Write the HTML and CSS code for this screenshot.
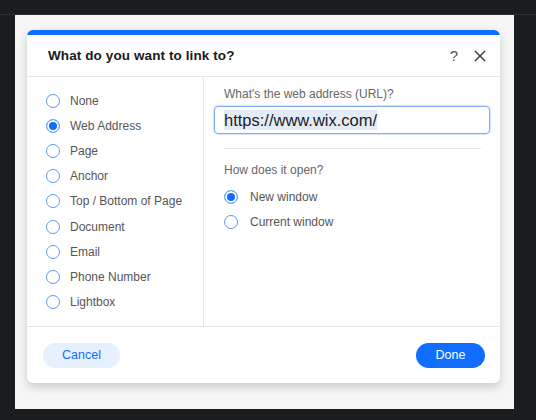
FILE: index.html
```html
<!DOCTYPE html>
<html lang="en">
<head>
  <meta charset="UTF-8" />
  <title>Link Panel</title>
  <link rel="stylesheet" href="styles.css">
</head>
<body>
  <div class="topline"></div>
  <div class="stage">
    <div class="dialog">
      <div class="accent"></div>
      <div class="header">
        <h1>What do you want to link to?</h1>
        <div class="tools">
          <span class="help">?</span>
          <svg class="close" width="12" height="12" viewBox="0 0 12 12">
            <path d="M1 1 L11 11 M11 1 L1 11" stroke="#333" stroke-width="1.4" fill="none" />
          </svg>
        </div>
      </div>
      <div class="content">
        <ul class="types">
          <li><span class="radio"></span>None</li>
          <li><span class="radio on"></span>Web Address</li>
          <li><span class="radio"></span>Page</li>
          <li><span class="radio"></span>Anchor</li>
          <li><span class="radio"></span>Top / Bottom of Page</li>
          <li><span class="radio"></span>Document</li>
          <li><span class="radio"></span>Email</li>
          <li><span class="radio"></span>Phone Number</li>
          <li><span class="radio"></span>Lightbox</li>
        </ul>
        <div class="form">
          <label class="label">What's the web address (URL)?</label>
          <div class="input"><span class="sel">https://www.wix.com/</span></div>
          <hr class="divider" />
          <div class="label open">How does it open?</div>
          <div class="option"><span class="radio on"></span>New window</div>
          <div class="option"><span class="radio"></span>Current window</div>
        </div>
      </div>
      <div class="footer">
        <button class="cancel">Cancel</button>
        <button class="done">Done</button>
      </div>
    </div>
  </div>
</body>
</html>
```

FILE: styles.css
```css
html, body {
  margin: 0;
  background: #1b1c1e;
  font-family: 'Liberation Sans', Arial, sans-serif;
}
.topline {
  height: 14px;
  border-bottom: 1px solid #2c2d30;
}
.stage {
  margin-left: 15px;
  width: 499px;
  height: 394px;
  background: #f6f6f7;
  box-sizing: border-box;
  padding: 15px 0 0 12px;
}
.dialog {
  width: 473px;
  background: #fff;
  border-radius: 6px;
  overflow: hidden;
  box-shadow: 0 4px 10px rgba(0, 0, 0, 0.18);
}
.accent {
  height: 5px;
  background: #116dff;
}
.header {
  height: 41px;
  border-bottom: 1px solid #e5e7eb;
  display: flex;
  align-items: center;
  justify-content: space-between;
  padding: 0 14px 0 21px;
}
h1 {
  margin: 0;
  font-size: 13.5px;
  font-weight: bold;
  color: #1a1a1a;
  letter-spacing: 0.1px;
}
.tools {
  display: flex;
  align-items: center;
  gap: 16px;
}
.help {
  font-size: 15px;
  color: #555;
}
.content {
  display: flex;
  height: 249px;
  border-bottom: 1px solid #e5e7eb;
}
.types {
  list-style: none;
  margin: 0;
  padding: 11px 0 0 19px;
  width: 177px;
  box-sizing: border-box;
  border-right: 1px solid #e5e7eb;
}
.types li, .option {
  display: flex;
  align-items: center;
  height: 25.2px;
  font-size: 12px;
  color: #555;
}
.radio {
  width: 12px;
  height: 12px;
  border: 1.5px solid #5c98f6;
  border-radius: 50%;
  margin-right: 10px;
  flex: none;
  background: #fff;
}
.radio.on {
  background: #116dff;
  box-shadow: inset 0 0 0 2px #fff;
  border-color: #6fa4f8;
}
.form {
  flex: 1;
  padding: 10px 10px 0 10px;
}
.label {
  display: block;
  font-size: 12px;
  color: #666;
  padding-left: 10px;
}
.label.open {
  margin-bottom: 7px;
}
.input {
  margin-top: 5px;
  height: 28px;
  border: 1px solid #85adf3;
  border-radius: 4px;
  box-sizing: border-box;
  display: flex;
  align-items: center;
  padding-left: 9px;
  box-shadow: 0 0 0 1px #d6e4fc;
}
.sel {
  font-size: 16.5px;
  color: #222;
  background: #e4ecf8;
  line-height: 20px;
}
.divider {
  border: none;
  border-top: 1px solid #e5e7eb;
  margin: 14px 9px 14px 10px;
}
.option {
  padding-left: 10px;
}
.option .radio {
  margin-right: 12px;
}
.footer {
  height: 56px;
  display: flex;
  align-items: center;
  justify-content: space-between;
  padding: 0 15px 0 16px;
}
button {
  font-family: 'Liberation Sans', Arial, sans-serif;
  font-size: 12.5px;
  height: 25px;
  border: none;
  border-radius: 13px;
  cursor: pointer;
}
.cancel {
  width: 77px;
  background: #e7f0ff;
  color: #116dff;
}
.done {
  width: 69px;
  background: #116dff;
  color: #fff;
}
```
